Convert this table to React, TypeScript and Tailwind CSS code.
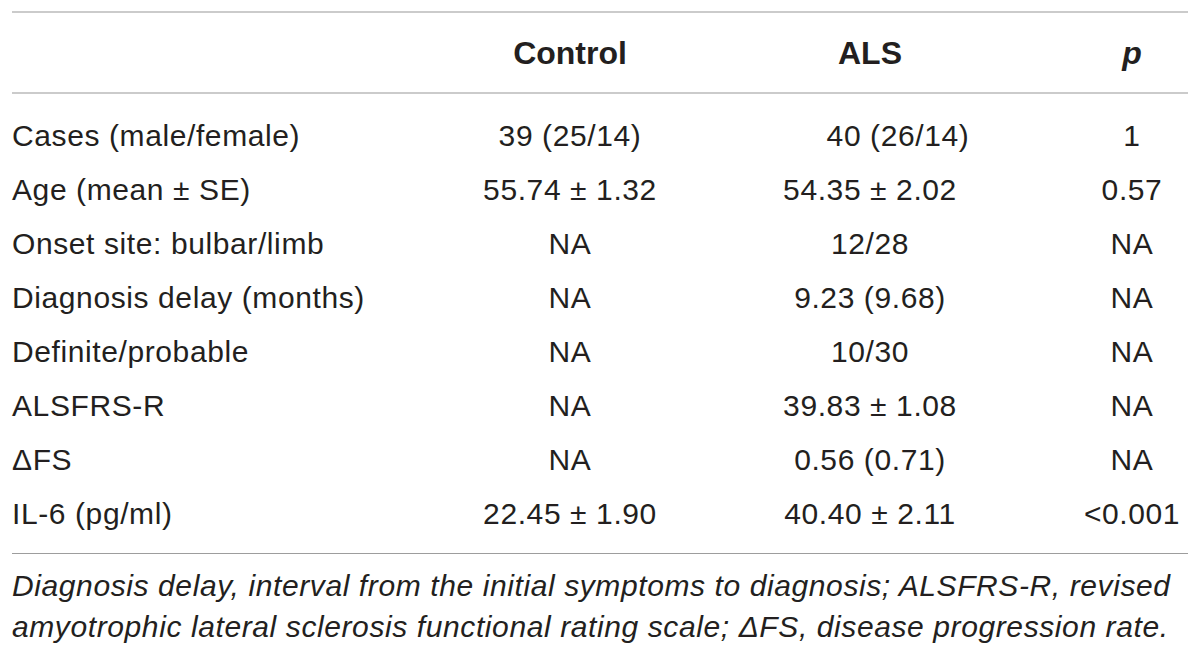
const rows = [
  { label: "Cases (male/female)", control: "39 (25/14)", als: "40 (26/14)", p: "1", shift: true },
  { label: "Age (mean ± SE)", control: "55.74 ± 1.32", als: "54.35 ± 2.02", p: "0.57" },
  { label: "Onset site: bulbar/limb", control: "NA", als: "12/28", p: "NA" },
  { label: "Diagnosis delay (months)", control: "NA", als: "9.23 (9.68)", p: "NA" },
  { label: "Definite/probable", control: "NA", als: "10/30", p: "NA" },
  { label: "ALSFRS-R", control: "NA", als: "39.83 ± 1.08", p: "NA" },
  { label: "ΔFS", control: "NA", als: "0.56 (0.71)", p: "NA" },
  { label: "IL-6 (pg/ml)", control: "22.45 ± 1.90", als: "40.40 ± 2.11", p: "<0.001" },
];

export default function App() {
  return (
    <div className="w-[1200px] h-[658px] bg-white px-[12px] pt-[11px] text-[#231f20] font-['Liberation_Sans',Arial,sans-serif] overflow-hidden">
      {/* top rule */}
      <div className="h-[2px] bg-[#cbcbcb]" />

      {/* header */}
      <div className="grid grid-cols-[408px_300px_300px_1fr] h-[79px] items-center text-[32px] font-bold">
        <div />
        <div className="text-center">Control</div>
        <div className="text-center">ALS</div>
        <div className="flex justify-end">
          <div className="w-[112px] text-center italic">p</div>
        </div>
      </div>

      <div className="h-[2px] bg-[#cbcbcb]" />

      {/* body */}
      <div className="pt-[14px] pb-[13px] text-[30px] tracking-[0.6px]">
        {rows.map((r) => (
          <div key={r.label} className="grid grid-cols-[408px_300px_300px_1fr] h-[54px] items-center">
            <div>{r.label}</div>
            <div className="text-center">{r.control}</div>
            <div className="text-center">
              <span className={r.shift ? "inline-block ml-[56px]" : ""}>{r.als}</span>
            </div>
            <div className="flex justify-end">
              <div className="w-[112px] text-center">{r.p}</div>
            </div>
          </div>
        ))}
      </div>

      <div className="h-px bg-[#9d9d9d]" />

      {/* footnote */}
      <p className="pt-[11px] text-[30px] leading-[41px] italic tracking-[0.6px]">
        Diagnosis delay, interval from the initial symptoms to diagnosis; ALSFRS-R, revised amyotrophic lateral
        sclerosis functional rating scale; ΔFS, disease progression rate.
      </p>
    </div>
  );
}
